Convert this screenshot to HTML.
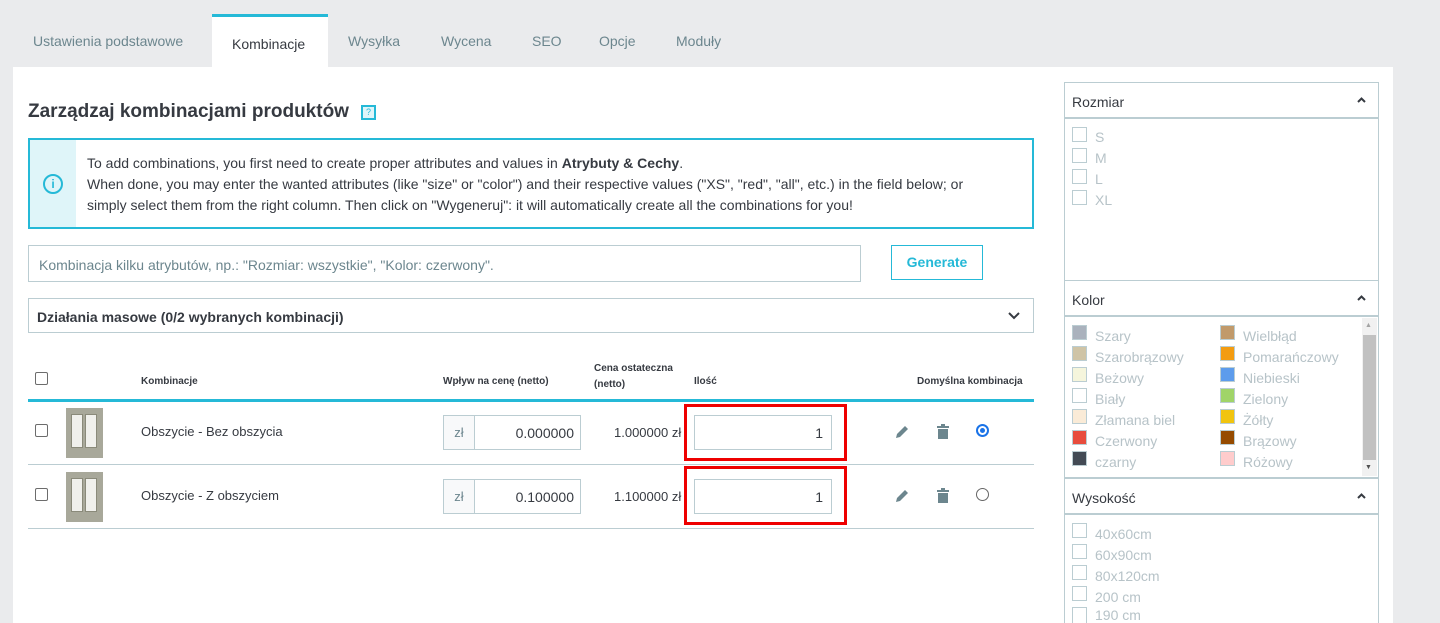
<!DOCTYPE html>
<html><head><meta charset="utf-8">
<style>
*{box-sizing:border-box;margin:0;padding:0}
html,body{width:1440px;height:623px;overflow:hidden}
body{background:#eaebed;font-family:"Liberation Sans",sans-serif;color:#363a41;position:relative}
.a{position:absolute}
.tab{position:absolute;top:33px;font-size:14px;color:#6c868e}
.panel{position:absolute;left:13px;top:67px;width:1380px;height:556px;background:#fff}
.cb{display:inline-block;width:13px;height:13px;border:1px solid #6c6c6c;border-radius:2px;background:#fff}
.th{font-size:10px;font-weight:bold;color:#363a41}
.row{position:absolute;left:28px;width:1006px;height:64px;border-bottom:1px solid #bbcdd2}
.inp{position:absolute;border:1px solid #bbcdd2;background:#fff}
.box{position:absolute;left:1064px;width:315px;border:1px solid #bbcdd2;border-bottom:none;background:#fff}
.hd{position:absolute;left:1065px;width:313px;height:36px;border-bottom:2px solid #bbcdd2;font-size:14px;padding:11px 0 0 7px;background:#fff}
.hd svg{position:absolute;right:12px;top:14px}
.it{position:absolute;font-size:14px;color:#b7c3c8;line-height:16px}
.sq{position:absolute;width:15px;height:15px;border:1px solid #bbcdd2}
.thumb{position:absolute;width:37px;height:50px;background:#a8a89a}
.thumb i{position:absolute;top:6px;width:12px;height:34px;background:#f0f0ec;border:1px solid #8a8a7a}
</style></head><body>
<div class="tab" style="left:33px">Ustawienia podstawowe</div>
<div class="a" style="left:212px;top:14px;width:116px;height:53px;background:#fff;border-top:3px solid #25b9d7"></div>
<div class="tab" style="left:232px;top:36px;color:#363a41">Kombinacje</div>
<div class="tab" style="left:348px">Wysyłka</div>
<div class="tab" style="left:441px">Wycena</div>
<div class="tab" style="left:532px">SEO</div>
<div class="tab" style="left:599px">Opcje</div>
<div class="tab" style="left:676px">Moduły</div>
<div class="panel"></div>

<div class="a" style="left:28px;top:101px;font-size:19px;font-weight:bold;color:#363a41">Zarządzaj kombinacjami produktów</div>
<div class="a" style="left:361px;top:105px;width:15px;height:15px;border:2px solid #25b9d7;font-size:9px;color:#25b9d7;text-align:center;line-height:11px;background:#dff5f9">?</div>

<div class="a" style="left:28px;top:138px;width:1006px;height:91px;border:2px solid #25b9d7;background:#fff"></div>
<div class="a" style="left:30px;top:140px;width:46px;height:87px;background:#dff5f9"></div>
<div class="a" style="left:43px;top:174px;width:20px;height:20px;border:2px solid #25b9d7;border-radius:50%;color:#25b9d7;font-size:12px;font-weight:bold;text-align:center;line-height:16px">i</div>
<div class="a" style="left:87px;top:153px;font-size:14px;line-height:21px;color:#363a41;width:940px">To add combinations, you first need to create proper attributes and values in <b>Atrybuty &amp; Cechy</b>.<br>When done, you may enter the wanted attributes (like "size" or "color") and their respective values ("XS", "red", "all", etc.) in the field below; or<br>simply select them from the right column. Then click on "Wygeneruj": it will automatically create all the combinations for you!</div>

<div class="inp" style="left:28px;top:245px;width:833px;height:37px;font-size:14px;color:#6c868e;padding:11px 0 0 10px">Kombinacja kilku atrybutów, np.: "Rozmiar: wszystkie", "Kolor: czerwony".</div>
<div class="a" style="left:891px;top:245px;width:92px;height:35px;border:1px solid #25b9d7;color:#25b9d7;font-size:14px;font-weight:bold;text-align:center;line-height:33px">Generate</div>

<div class="inp" style="left:28px;top:298px;width:1006px;height:35px;font-size:14px;font-weight:bold;padding:10px 0 0 8px">Działania masowe (0/2 wybranych kombinacji)</div>
<svg class="a" style="left:1007px;top:311px" width="14" height="10"><path d="M2 2 L7 7 L12 2" stroke="#363a41" stroke-width="2" fill="none"/></svg>

<span class="cb a" style="left:35px;top:372px"></span>
<div class="a th" style="left:141px;top:376px">Kombinacje</div>
<div class="a th" style="left:443px;top:376px">Wpływ na cenę (netto)</div>
<div class="a th" style="left:594px;top:361px;line-height:16px">Cena ostateczna<br>(netto)</div>
<div class="a th" style="left:694px;top:376px">Ilość</div>
<div class="a th" style="left:917px;top:376px">Domyślna kombinacja</div>
<div class="a" style="left:28px;top:399px;width:1006px;height:3px;background:#25b9d7"></div>

<div class="row" style="top:401px"></div>
<div class="row" style="top:465px"></div>

<span class="cb a" style="left:35px;top:424px"></span>
<div class="thumb" style="left:66px;top:408px"><i style="left:5px"></i><i style="left:19px"></i></div>
<div class="a" style="left:141px;top:424px;font-size:13px">Obszycie - Bez obszycia</div>
<div class="inp" style="left:443px;top:415px;width:138px;height:35px;"></div>
<div class="a" style="left:444px;top:416px;width:31px;height:33px;background:#f8f9fa;border-right:1px solid #bbcdd2;font-size:13px;color:#6c868e;text-align:center;line-height:33px">zł</div>
<div class="a" style="left:475px;top:425px;width:99px;text-align:right;font-size:14px">0.000000</div>
<div class="a" style="left:614px;top:425px;font-size:13px;width:70px;overflow:hidden;white-space:nowrap">1.000000 zł</div>
<div class="a" style="left:684px;top:404px;width:163px;height:57px;border:3px solid #e00"></div>
<div class="inp" style="left:694px;top:415px;width:138px;height:35px;font-size:14px;text-align:right;padding:9px 8px 0 0">1</div>

<span class="cb a" style="left:35px;top:488px"></span>
<div class="thumb" style="left:66px;top:472px"><i style="left:5px"></i><i style="left:19px"></i></div>
<div class="a" style="left:141px;top:488px;font-size:13px">Obszycie - Z obszyciem</div>
<div class="inp" style="left:443px;top:479px;width:138px;height:35px;"></div>
<div class="a" style="left:444px;top:480px;width:31px;height:33px;background:#f8f9fa;border-right:1px solid #bbcdd2;font-size:13px;color:#6c868e;text-align:center;line-height:33px">zł</div>
<div class="a" style="left:475px;top:489px;width:99px;text-align:right;font-size:14px">0.100000</div>
<div class="a" style="left:614px;top:489px;font-size:13px;width:70px;overflow:hidden;white-space:nowrap">1.100000 zł</div>
<div class="a" style="left:684px;top:466px;width:163px;height:59px;border:3px solid #e00"></div>
<div class="inp" style="left:694px;top:479px;width:138px;height:35px;font-size:14px;text-align:right;padding:9px 8px 0 0">1</div>

<svg class="a" style="left:894px;top:424px" width="16" height="16"><path d="M2 14 L3 10 L11 2 L14 5 L6 13 Z" fill="#6c868e"/></svg>
<svg class="a" style="left:936px;top:424px" width="14" height="16"><rect x="1" y="2" width="12" height="2" fill="#6c868e"/><rect x="5" y="0" width="4" height="2" fill="#6c868e"/><rect x="2" y="5" width="10" height="10" fill="#6c868e"/></svg>
<div class="a" style="left:976px;top:424px;width:13px;height:13px;border:2px solid #1a73e8;border-radius:50%;padding:2px"><div style="width:5px;height:5px;background:#1a73e8;border-radius:50%"></div></div>
<svg class="a" style="left:894px;top:488px" width="16" height="16"><path d="M2 14 L3 10 L11 2 L14 5 L6 13 Z" fill="#6c868e"/></svg>
<svg class="a" style="left:936px;top:488px" width="14" height="16"><rect x="1" y="2" width="12" height="2" fill="#6c868e"/><rect x="5" y="0" width="4" height="2" fill="#6c868e"/><rect x="2" y="5" width="10" height="10" fill="#6c868e"/></svg>
<div class="a" style="left:976px;top:488px;width:13px;height:13px;border:1px solid #666;border-radius:50%"></div>

<div class="box" style="top:82px;height:541px"></div>
<div class="hd" style="top:83px">Rozmiar<svg width="9" height="6"><path d="M1 5 L4.5 1.5 L8 5" stroke="#363a41" stroke-width="2" fill="none"/></svg></div>
<div class="sq" style="left:1072px;top:127px"></div><div class="it" style="left:1095px;top:129px">S</div>
<div class="sq" style="left:1072px;top:148px"></div><div class="it" style="left:1095px;top:150px">M</div>
<div class="sq" style="left:1072px;top:169px"></div><div class="it" style="left:1095px;top:171px">L</div>
<div class="sq" style="left:1072px;top:190px"></div><div class="it" style="left:1095px;top:192px">XL</div>
<div class="a" style="left:1065px;top:280px;width:313px;height:1px;background:#bbcdd2"></div>
<div class="hd" style="top:281px">Kolor<svg width="9" height="6"><path d="M1 5 L4.5 1.5 L8 5" stroke="#363a41" stroke-width="2" fill="none"/></svg></div>
<div class="a" style="left:1362px;top:318px;width:15px;height:158px;background:#f1f1f1"></div>
<div class="a" style="left:1363px;top:335px;width:13px;height:125px;background:#c1c1c1"></div>
<div class="a" style="left:1365px;top:322px;font-size:7px;color:#a3a3a3">▲</div>
<div class="a" style="left:1365px;top:464px;font-size:7px;color:#505050">▼</div>
<div class="sq" style="left:1072px;top:325px;background:#aab2bd"></div><div class="it" style="left:1095px;top:328px">Szary</div>
<div class="sq" style="left:1072px;top:346px;background:#cfc4a6"></div><div class="it" style="left:1095px;top:349px">Szarobrązowy</div>
<div class="sq" style="left:1072px;top:367px;background:#f5f5dc"></div><div class="it" style="left:1095px;top:370px">Beżowy</div>
<div class="sq" style="left:1072px;top:388px;background:#fff"></div><div class="it" style="left:1095px;top:391px">Biały</div>
<div class="sq" style="left:1072px;top:409px;background:#faebd7"></div><div class="it" style="left:1095px;top:412px">Złamana biel</div>
<div class="sq" style="left:1072px;top:430px;background:#e84c3d"></div><div class="it" style="left:1095px;top:433px">Czerwony</div>
<div class="sq" style="left:1072px;top:451px;background:#434a54"></div><div class="it" style="left:1095px;top:454px">czarny</div>
<div class="sq" style="left:1220px;top:325px;background:#c19a6b"></div><div class="it" style="left:1243px;top:328px">Wielbłąd</div>
<div class="sq" style="left:1220px;top:346px;background:#f39c11"></div><div class="it" style="left:1243px;top:349px">Pomarańczowy</div>
<div class="sq" style="left:1220px;top:367px;background:#5d9cec"></div><div class="it" style="left:1243px;top:370px">Niebieski</div>
<div class="sq" style="left:1220px;top:388px;background:#a0d468"></div><div class="it" style="left:1243px;top:391px">Zielony</div>
<div class="sq" style="left:1220px;top:409px;background:#f1c40f"></div><div class="it" style="left:1243px;top:412px">Żółty</div>
<div class="sq" style="left:1220px;top:430px;background:#964b00"></div><div class="it" style="left:1243px;top:433px">Brązowy</div>
<div class="sq" style="left:1220px;top:451px;background:#fcc"></div><div class="it" style="left:1243px;top:454px">Różowy</div>
<div class="a" style="left:1065px;top:477px;width:313px;height:2px;background:#bbcdd2"></div>
<div class="hd" style="top:479px">Wysokość<svg width="9" height="6"><path d="M1 5 L4.5 1.5 L8 5" stroke="#363a41" stroke-width="2" fill="none"/></svg></div>
<div class="sq" style="left:1072px;top:523px"></div><div class="it" style="left:1095px;top:526px">40x60cm</div>
<div class="sq" style="left:1072px;top:544px"></div><div class="it" style="left:1095px;top:547px">60x90cm</div>
<div class="sq" style="left:1072px;top:565px"></div><div class="it" style="left:1095px;top:568px">80x120cm</div>
<div class="sq" style="left:1072px;top:586px"></div><div class="it" style="left:1095px;top:589px">200 cm</div>
<div class="sq" style="left:1072px;top:607px;height:16px;border-bottom:none"></div><div class="it" style="left:1095px;top:607px;height:16px;overflow:hidden">190 cm</div>
</body></html>
